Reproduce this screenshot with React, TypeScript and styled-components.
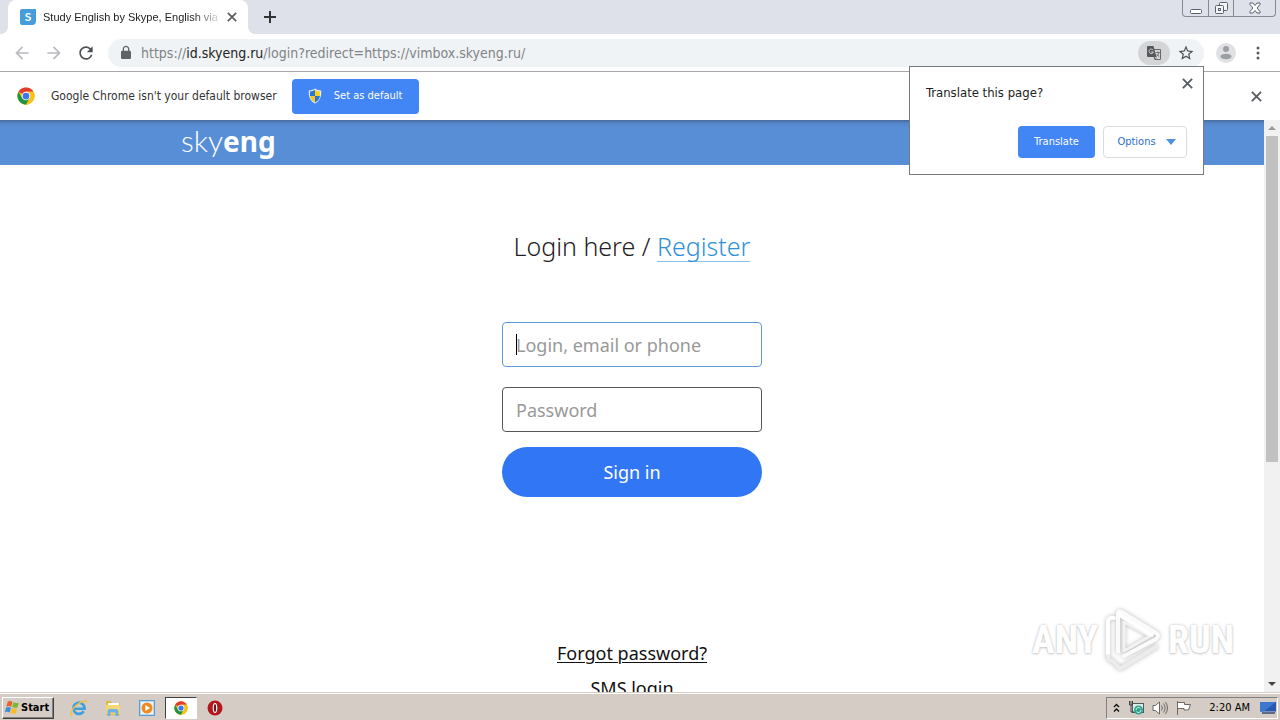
import React from 'react';
import styled, { createGlobalStyle, css } from 'styled-components';

const ui = '"DejaVu Sans Condensed", "Noto Sans", sans-serif';
const site = '"Noto Sans", "Open Sans", sans-serif';

const GlobalStyle = createGlobalStyle`
  *, *::before, *::after { box-sizing: border-box; }
  body { margin: 0; background: #fff; font-family: ${ui}; overflow: hidden; }
  button, input { font: inherit; }
  button { padding: 0; border: 0; background: none; cursor: pointer; }
  svg { display: block; flex: none; }
`;

const Desktop = styled.div`
  position: relative;
  display: flex;
  flex-direction: column;
  height: 100vh;
`;

/* ---------- browser chrome ---------- */

const TabStrip = styled.header`
  display: flex;
  height: 34px;
  padding-left: 8px;
  background: #dee1e9;
`;

const Tab = styled.div`
  position: relative;
  display: flex;
  align-items: center;
  gap: 7px;
  width: 240px;
  padding: 0 10px 0 12px;
  background: #fff;
  border-radius: 8px 8px 0 0;

  &::before, &::after {
    content: '';
    position: absolute;
    bottom: 0;
    width: 8px;
    height: 8px;
  }
  &::before { right: 100%; background: radial-gradient(circle at 0 0, transparent 8px, #fff 8px); }
  &::after { left: 100%; background: radial-gradient(circle at 100% 0, transparent 8px, #fff 8px); }
`;

const TabTitle = styled.span`
  flex: 1;
  min-width: 0;
  overflow: hidden;
  white-space: nowrap;
  font: 11px/16px "Liberation Sans", sans-serif;
  color: #222;
  mask-image: linear-gradient(to right, #000 150px, transparent 180px);
`;

const IconButton = styled.button<{ $size?: number }>`
  display: flex;
  align-items: center;
  justify-content: center;
  flex: none;
  width: ${p => p.$size ?? 16}px;
  height: ${p => p.$size ?? 16}px;
  color: #5a5d61;
`;

const NewTab = styled(IconButton)`
  align-self: center;
  margin-left: 10px;
  color: #333;
`;

const WindowControls = styled.div`
  position: absolute;
  top: 0;
  right: 4px;
  display: flex;
  height: 17px;
  border: 1px solid #858993;
  border-top: 0;
  border-radius: 0 0 4px 4px;
`;

const WindowButton = styled.button<{ $wide?: boolean }>`
  display: flex;
  align-items: center;
  justify-content: center;
  width: ${p => (p.$wide ? 42 : 25)}px;
  & + & { border-left: 1px solid #858993; }
`;

const Toolbar = styled.div`
  display: flex;
  align-items: center;
  height: 38px;
  padding: 0 12px;
  border-bottom: 1px solid #a9a9ad;
  background: #fff;
`;

const NavButtons = styled.nav`
  display: flex;
  gap: 12px;
`;

const Omnibox = styled.div`
  display: flex;
  flex: 1;
  align-items: center;
  height: 28px;
  margin: 0 12px;
  padding: 0 9px 0 10px;
  border-radius: 14px;
  background: #f0f3f5;
`;

const Url = styled.div`
  flex: 1;
  margin-left: 7px;
  font: 14px/20px ${ui};
  color: #808387;
  b { font-weight: 400; color: #222; }
`;

const TranslateChip = styled.button`
  display: flex;
  align-items: center;
  justify-content: center;
  width: 32px;
  height: 24px;
  margin-right: 7px;
  border-radius: 12px;
  background: #d3d5d7;
`;

const Avatar = styled(IconButton)`
  margin-right: 12px;
`;

const InfoBar = styled.div`
  display: flex;
  align-items: center;
  height: 48px;
  padding: 0 16px 0 17px;
  background: #fff;
`;

const InfoText = styled.span`
  margin: 0 15px 0 16px;
  font-size: 12px;
  line-height: 16px;
  color: #333;
`;

const blueButton = css`
  display: flex;
  align-items: center;
  justify-content: center;
  border-radius: 4px;
  background: #4285f4;
  color: #fff;
  font-size: 11px;
  line-height: 16px;
`;

const DefaultButton = styled.button`
  ${blueButton}
  gap: 12px;
  width: 127px;
  height: 35px;
  margin-right: auto;
`;

const Bubble = styled.section`
  position: absolute;
  top: 66px;
  right: 76px;
  z-index: 2;
  width: 295px;
  padding: 8px 16px 16px;
  border: 1px solid #77797c;
  background: #fff;
`;

const BubbleHead = styled.div`
  display: flex;
  justify-content: space-between;
  height: 51px;
  margin-right: -8px;
`;

const BubbleTitle = styled.h2`
  margin: 8px 0 0;
  font-size: 13px;
  line-height: 20px;
  font-weight: 400;
  color: #222;
`;

const BubbleActions = styled.div`
  display: flex;
  justify-content: flex-end;
  gap: 8px;
`;

const TranslateButton = styled.button`
  ${blueButton}
  width: 77px;
  height: 32px;
`;

const OptionsButton = styled(TranslateButton)`
  gap: 10px;
  width: 84px;
  padding-left: 3px;
  border: 1px solid #dadce0;
  background: #fff;
  color: #2a6fc9;
`;

/* ---------- web page ---------- */

const Viewport = styled.div`
  display: flex;
  flex: 1;
  min-height: 0;
`;

const Page = styled.div`
  flex: 1;
  min-width: 0;
  overflow: hidden;
  background: #fff;
  font-family: ${site};
`;

const SiteHeader = styled.header`
  height: 45px;
  background: linear-gradient(#46699c 0, #5585c6 3px, #588ed6 7px);
`;

const SiteHeaderInner = styled.div`
  max-width: 902px;
  margin: 0 auto;
`;

const Logo = styled.a`
  display: inline-block;
  color: #fff;
  font: 300 30px/40px Lato, sans-serif;
  text-decoration: none;
  b { font: 700 28px/40px ${site}; }
`;

const Main = styled.main`
  display: flex;
  flex-direction: column;
  align-items: center;
  padding-top: 65px;
`;

const Heading = styled.h1`
  margin: 0 0 60px;
  font-size: 25px;
  line-height: 32px;
  font-weight: 300;
  color: #222;
  a {
    display: inline-block;
    line-height: 29px;
    border-bottom: 1px solid #8cc2ea;
    color: #2f8fd8;
    text-decoration: none;
  }
`;

const Form = styled.form`
  display: flex;
  flex-direction: column;
  width: 260px;
  font-size: 18px;
`;

const Field = styled.label`
  position: relative;
  display: block;
  margin-bottom: 20px;
`;

const Input = styled.input<{ $active?: boolean }>`
  display: block;
  width: 100%;
  height: 45px;
  padding: 0 13px;
  border: 1px solid ${p => (p.$active ? '#5c9bdc' : '#55565a')};
  border-radius: 4px;
  background: #fff;
  color: #333;
  outline: none;
  &::placeholder { color: #999; opacity: 1; }
`;

const Caret = styled.span`
  position: absolute;
  top: 12px;
  left: 14px;
  width: 1px;
  height: 21px;
  background: #000;
`;

const SignIn = styled.button`
  height: 50px;
  margin-top: -5px;
  border-radius: 25px;
  background: #3176f4;
  color: #fff;
`;

const Links = styled.nav`
  display: flex;
  flex-direction: column;
  align-items: center;
  gap: 11px;
  margin-top: 144px;
  font-size: 18px;
  line-height: 24px;
  a { color: #111; text-underline-offset: 2px; text-decoration-thickness: 1px; }
`;

const ScrollBar = styled.div`
  display: flex;
  flex-direction: column;
  justify-content: space-between;
  width: 16px;
  background: #f1f1f1;
`;

const ScrollThumb = styled.div`
  flex: 0 0 57%;
  margin: 0 2px auto;
  background: #c1c1c1;
`;

const Watermark = styled.div`
  position: absolute;
  right: 46px;
  bottom: 48px;
  display: flex;
  align-items: center;
  gap: 6px;
  color: #fff;
  font: 700 38px/62px "Liberation Sans Narrow", "Roboto Condensed", "Liberation Sans", sans-serif;
  text-shadow: 0 0 3px #c2c2c2, 0 1px 2px #d5d5d5;
  svg { filter: drop-shadow(0 0 2px #b8b8b8); }
`;

/* ---------- taskbar ---------- */

const Taskbar = styled.footer`
  display: flex;
  align-items: center;
  height: 28px;
  padding: 2px 2px 0 2px;
  border-top: 1px solid #d4cec6;
  box-shadow: inset 0 1px #fff;
  background: #d5cdc5;
`;

const StartButton = styled.button`
  display: flex;
  align-items: center;
  width: 52px;
  height: 22px;
  padding-left: 1px;
  margin-right: 8px;
  border: 1px solid;
  border-color: #fff #404040 #404040 #fff;
  box-shadow: inset -1px -1px #808080;
  font: 700 11px/16px ${ui};
  color: #000;
`;

const Task = styled.button<{ $open?: boolean }>`
  display: flex;
  align-items: center;
  justify-content: center;
  width: 34px;
  height: 22px;
  ${p =>
    p.$open &&
    css`
      width: 32px;
      margin: 0 1px;
      border: 1px solid;
      border-color: #404040 #fff #fff #404040;
      background: #fff;
    `}
`;

const Tray = styled.div`
  display: flex;
  align-items: center;
  gap: 8px;
  height: 22px;
  margin-left: auto;
  padding: 0 1px 0 6px;
  border: 1px solid;
  border-color: #808080 #fff #fff #808080;
`;

const Clock = styled.time`
  margin: 0 2px 0 9px;
  font: 11px/16px ${ui};
  color: #000;
`;

/* ---------- icons ---------- */

const Glyph = ({ d, size = 20, color = '#5f6368' }: { d: string; size?: number; color?: string }) => (
  <svg width={size} height={size} viewBox="0 0 24 24" fill={color}>
    <path d={d} />
  </svg>
);

const Cross = ({ size = 11 }: { size?: number }) => (
  <svg width={size} height={size} viewBox="0 0 10 10" stroke="currentColor" strokeWidth="1.7">
    <path d="M.8.8l8.400 8.400M9.200.8L.8 9.200" />
  </svg>
);

const ChromeLogo = ({ size = 18 }: { size?: number }) => (
  <svg width={size} height={size} viewBox="0 0 48 48">
    <circle cx="24" cy="24" r="23" fill="#fbc116" />
    <path d="M24 24L4.1 12.5A23 23 0 0 1 43.9 12.5H24z" fill="#e33b2e" />
    <path d="M4.1 12.5A23 23 0 0 0 24 47L34 29.7 24 24 14 29.7z" fill="#229342" />
    <path d="M24 12.5h19.9A23 23 0 0 1 24 47l10-17.3z" fill="#fbc116" />
    <circle cx="24" cy="24" r="11.5" fill="#fff" />
    <circle cx="24" cy="24" r="9" fill="#3b78e7" />
  </svg>
);

const SkyengIcon = () => (
  <svg width="16" height="16" viewBox="0 0 16 16">
    <path d="M2 0h14v12a4 4 0 0 1-4 4H2a2 2 0 0 1-2-2V2a2 2 0 0 1 2-2z" fill="#459ddb" />
    <text x="8" y="12" textAnchor="middle" fontFamily="Lato, sans-serif" fontWeight="700" fontSize="12" fill="#fff">S</text>
  </svg>
);

const Shield = () => (
  <svg width="14" height="16" viewBox="0 0 14 16">
    <path d="M7 .5C5 2 3 2.4.8 2.4c-.4 6 1.2 10.4 6.2 13 5-2.6 6.600-7 6.200-13C11 2.400 9 2 7 .5z" fill="#e9edf2" />
    <path d="M7 1.800C5.400 2.900 3.800 3.300 2 3.400V8h5z" fill="#2e73d8" />
    <path d="M7 1.800c1.600 1.100 3.200 1.500 5 1.600V8H7z" fill="#f8d21c" />
    <path d="M2 8c.4 2.800 2 5 5 6.400V8z" fill="#f8c81c" />
    <path d="M12 8c-.4 2.800-2 5-5 6.400V8z" fill="#2e73d8" />
  </svg>
);

const TranslateIcon = () => (
  <svg width="16" height="16" viewBox="0 0 16 16">
    <path d="M7 4.500h7.500v10H9z" fill="#d3d5d7" stroke="#66696c" />
    <path d="M2 1h5.500l3 11H2a1 1 0 0 1-1-1V2a1 1 0 0 1 1-1z" fill="#55585b" />
    <path d="M7.200 5.200A2.200 2.200 0 1 0 7.400 7H5.300" fill="none" stroke="#d3d5d7" />
    <path d="M9.800 7.500h4M11.800 6.500v1M13 7.500c-.3 1.800-1.300 3-2.500 3.800M10.800 9c.6 1.200 1.400 2 2.400 2.500M8 12.500l1 2 1.500-2" fill="none" stroke="#66696c" strokeWidth=".9" />
  </svg>
);

const AvatarIcon = () => (
  <svg width="20" height="20" viewBox="0 0 20 20">
    <circle cx="10" cy="10" r="10" fill="#e0e1e3" />
    <circle cx="10" cy="6" r="3" fill="#9b9ea2" />
    <ellipse cx="10" cy="13.500" rx="5.500" ry="2.700" fill="#9b9ea2" />
  </svg>
);

const ScrollArrow = ({ down }: { down?: boolean }) => (
  <svg width="16" height="16" viewBox="0 0 16 16">
    <path d={down ? 'M4 6h8l-4 4z' : 'M4 10h8l-4-4z'} fill={down ? '#444' : '#999'} />
  </svg>
);

const Dropdown = () => (
  <svg width="10" height="6" viewBox="0 0 10 6">
    <path d="M0 0h10L5 6z" fill="#4e8fe0" />
  </svg>
);

const PlayMark = () => (
  <svg width="58" height="64" viewBox="0 0 58 64" fill="none" stroke="#fff" strokeWidth="4" strokeLinejoin="round" strokeLinecap="round">
    <path d="M14 44V6q0-4 4-2l34 21q4 3 0 6L20 48" stroke="#fbfbfb" />
    <path d="M20 14l26 14-26 15z" stroke="#f2f2f2" strokeWidth="3" />
    <path d="M10 10q-6-1-6 4v34" />
    <path d="M4 48q0 5 5 5l5 6q2 2 5 0l33-20" stroke="#ececec" />
    <path d="M14 6l34 21" />
  </svg>
);

const WindowsFlag = () => (
  <svg width="17" height="17" viewBox="0 0 16 16">
    <path d="M3.500 2.500C5 1.600 6.500 1.800 8 2.700L6.800 7.400C5.300 6.500 3.800 6.400 2.200 7.200z" fill="#e8602c" />
    <path d="M8.800 3c1.600.9 3.200 1 5.200.200l-1.300 4.600c-1.700.8-3.400.7-5-.2z" fill="#7db832" />
    <path d="M2 8c1.500-.8 3-.7 4.600.200l-1.200 4.600c-1.500-.9-3-1-4.600-.2z" fill="#3f8edb" />
    <path d="M7.400 8.500c1.600.8 3.300 1 5 .2l-1.200 4.600c-1.800.8-3.400.6-5-.2z" fill="#f7bd22" />
  </svg>
);

const IeIcon = () => (
  <svg width="18" height="18" viewBox="0 0 18 18" fill="none">
    <path d="M13.700 12.200A5.600 5.600 0 1 1 14.500 9.800H4.500" stroke="#3c9fe0" strokeWidth="2.600" />
    <path d="M2.500 15.500C-1 17 1 11 6 6.500 11 2 17 .5 16.500 3.500" stroke="#f0c040" strokeWidth="1.500" />
  </svg>
);

const FolderIcon = () => (
  <svg width="18" height="18" viewBox="0 0 18 18">
    <path d="M2 2h5l1 2h8v12H2z" fill="#e2b748" />
    <path d="M4 4h11v5H4z" fill="#fff" />
    <path d="M2 6h14v9H2z" fill="#f5d675" />
    <path d="M3.500 17v-5c0-1 1-2 2-2h7c1 0 2 1 2 2v5H11.500v-3.500h-5V17z" fill="#6fb2e2" />
  </svg>
);

const MediaIcon = () => (
  <svg width="16" height="16" viewBox="0 0 16 16">
    <rect x=".5" y=".5" width="15" height="15" fill="#b9d9f5" stroke="#5a9ad2" />
    <rect x="2" y="2" width="12" height="12" fill="#e9f3fb" />
    <circle cx="8" cy="8" r="5.500" fill="#f08a1d" />
    <path d="M6.300 5v6l4.700-3z" fill="#fff" />
  </svg>
);

const OperaIcon = () => (
  <svg width="16" height="16" viewBox="0 0 16 16">
    <circle cx="8" cy="8" r="7.500" fill="#b3161b" />
    <ellipse cx="8" cy="8" rx="2.300" ry="5" fill="#fff" />
    <ellipse cx="8" cy="8" rx="1.100" ry="4" fill="#7d0d10" />
  </svg>
);

const NetworkIcon = () => (
  <svg width="16" height="16" viewBox="0 0 16 16">
    <rect x="4.500" y="3.500" width="11" height="9" fill="#dcebe8" stroke="#4e5a5c" />
    <path d="M1.500 1v4h3V1M3 1v11h3" fill="none" stroke="#444" />
    <circle cx="10.500" cy="10" r="4.500" fill="#2fa38f" />
    <path d="M8 10a2.500 2.500 0 0 1 4.500-1.500M13 10a2.500 2.500 0 0 1-4.500 1.500" fill="none" stroke="#d9f3ec" />
  </svg>
);

const VolumeIcon = () => (
  <svg width="16" height="16" viewBox="0 0 16 16" fill="none" stroke="#6a6764">
    <path d="M1 5.500h2.500L7.500 2v12l-4-3.500H1z" fill="#fff" />
    <path d="M9.500 5.500q1.800 2.500 0 5M11.500 3.500q3.200 4.500 0 9M13.500 2q4 6 0 12" />
  </svg>
);

const FlagIcon = () => (
  <svg width="16" height="16" viewBox="0 0 16 16" stroke="#6a6764">
    <path d="M1.500 1v14" fill="none" />
    <path d="M1.500 2.500h7v2h6l-2 5.500H8V8.500H1.500z" fill="#fff" />
  </svg>
);

const DesktopIcon = () => (
  <svg width="16" height="14" viewBox="0 0 16 14">
    <path d="M0 1h16v9.500H0z" fill="#2558ae" />
    <path d="M0 1h16L4 10.500H0z" fill="#3c78d0" />
    <path d="M2 12h13" stroke="#344a70" strokeWidth="1.500" />
  </svg>
);

export default function App() {
  return (
    <Desktop>
      <GlobalStyle />
      <TabStrip>
        <Tab>
          <SkyengIcon />
          <TabTitle>Study English by Skype, English via S</TabTitle>
          <IconButton $size={12} aria-label="Close tab"><Cross size={10} /></IconButton>
        </Tab>
        <NewTab $size={24} aria-label="New tab">
          <svg width="12" height="12" viewBox="0 0 12 12" stroke="currentColor" strokeWidth="2"><path d="M6 0v12M0 6h12" /></svg>
        </NewTab>
        <WindowControls>
          <WindowButton aria-label="Minimize">
            <svg width="12" height="14" viewBox="0 0 12 14"><rect x=".5" y="8.500" width="11" height="4" rx="1" fill="#fff" stroke="#5d616b" /></svg>
          </WindowButton>
          <WindowButton aria-label="Restore">
            <svg width="13" height="14" viewBox="0 0 13 14" fill="#f4f5f8" stroke="#5d616b">
              <rect x="4.500" y="1.500" width="8" height="8" rx="1" />
              <rect x=".5" y="4.500" width="8" height="8" rx="1" />
              <rect x="3.500" y="7.500" width="2" height="2" />
            </svg>
          </WindowButton>
          <WindowButton $wide aria-label="Close">
            <svg width="12" height="12" viewBox="0 0 12 12">
              <path d="M1 1h3l2 2.500L8 1h3v1.500L8 6l3 3.500V11H8L6 8.500 4 11H1V9.500L4 6 1 2.500z" fill="#fff" stroke="#5d616b" />
            </svg>
          </WindowButton>
        </WindowControls>
      </TabStrip>

      <Toolbar>
        <NavButtons>
          <IconButton $size={20} aria-label="Back"><Glyph color="#b9bbbe" d="M20 11H7.830l5.590-5.590L12 4l-8 8 8 8 1.410-1.410L7.830 13H20v-2z" /></IconButton>
          <IconButton $size={20} aria-label="Forward"><Glyph color="#b9bbbe" d="M4 11h12.170l-5.590-5.590L12 4l8 8-8 8-1.410-1.410L16.170 13H4v-2z" /></IconButton>
          <IconButton $size={20} aria-label="Reload"><Glyph color="#4d5054" d="M17.650 6.350A7.958 7.958 0 0 0 12 4c-4.420 0-7.990 3.580-7.990 8s3.570 8 7.990 8c3.730 0 6.840-2.550 7.730-6h-2.080A5.990 5.990 0 0 1 12 18c-3.310 0-6-2.690-6-6s2.690-6 6-6c1.660 0 3.140.690 4.220 1.780L13 11h7V4l-2.350 2.350z" /></IconButton>
        </NavButtons>
        <Omnibox>
          <Glyph size={16} d="M17.500 8.500H17V6c0-2.760-2.240-5-5-5S7 3.240 7 6v2.500h-.5C5.100 8.500 4.500 9.400 4.500 10.500v8.500c0 1.100.9 2 2 2h11c1.100 0 2-.9 2-2v-8.500c0-1.100-.9-2-2-2zM9 6c0-1.660 1.340-3 3-3s3 1.340 3 3v2.500H9V6z" />
          <Url>https://<b>id.skyeng.ru</b>/login?redirect=https://vimbox.skyeng.ru/</Url>
          <TranslateChip aria-label="Translate this page"><TranslateIcon /></TranslateChip>
          <IconButton $size={18} aria-label="Bookmark this page"><Glyph size={18} color="#4d5054" d="M22 9.240l-7.190-.62L12 2 9.190 8.630 2 9.240l5.460 4.730L5.820 21 12 17.270 18.180 21l-1.630-7.030L22 9.240zM12 15.400l-3.760 2.270 1-4.280-3.320-2.880 4.380-.38L12 6.100l1.710 4.040 4.380.380-3.320 2.880 1 4.280L12 15.400z" /></IconButton>
        </Omnibox>
        <Avatar $size={20} aria-label="Profile"><AvatarIcon /></Avatar>
        <IconButton $size={20} aria-label="Menu">
          <svg width="4" height="14" viewBox="0 0 4 14" fill="currentColor"><circle cx="2" cy="2" r="1.500" /><circle cx="2" cy="7" r="1.500" /><circle cx="2" cy="12" r="1.500" /></svg>
        </IconButton>
      </Toolbar>

      <InfoBar>
        <ChromeLogo />
        <InfoText>Google Chrome isn't your default browser</InfoText>
        <DefaultButton><Shield />Set as default</DefaultButton>
        <IconButton aria-label="Dismiss"><Cross /></IconButton>
      </InfoBar>

      <Bubble>
        <BubbleHead>
          <BubbleTitle>Translate this page?</BubbleTitle>
          <IconButton aria-label="Close"><Cross /></IconButton>
        </BubbleHead>
        <BubbleActions>
          <TranslateButton>Translate</TranslateButton>
          <OptionsButton>Options<Dropdown /></OptionsButton>
        </BubbleActions>
      </Bubble>

      <Viewport>
        <Page>
          <SiteHeader>
            <SiteHeaderInner><Logo href="#">sky<b>eng</b></Logo></SiteHeaderInner>
          </SiteHeader>
          <Main>
            <Heading>Login here / <a href="#register">Register</a></Heading>
            <Form onSubmit={e => e.preventDefault()}>
              <Field>
                <Input $active type="text" placeholder="Login, email or phone" aria-label="Login, email or phone" />
                <Caret />
              </Field>
              <Field>
                <Input type="password" placeholder="Password" aria-label="Password" />
              </Field>
              <SignIn type="submit">Sign in</SignIn>
            </Form>
            <Links>
              <a href="#forgot">Forgot password?</a>
              <a href="#sms">SMS login</a>
            </Links>
          </Main>
        </Page>
        <ScrollBar>
          <ScrollArrow />
          <ScrollThumb />
          <ScrollArrow down />
        </ScrollBar>
      </Viewport>

      <Watermark><span>ANY</span><PlayMark /><span>RUN</span></Watermark>

      <Taskbar>
        <StartButton><WindowsFlag />Start</StartButton>
        <Task aria-label="Internet Explorer"><IeIcon /></Task>
        <Task aria-label="Explorer"><FolderIcon /></Task>
        <Task aria-label="Media Player"><MediaIcon /></Task>
        <Task $open aria-label="Chrome"><ChromeLogo size={14} /></Task>
        <Task aria-label="Opera"><OperaIcon /></Task>
        <Tray>
          <svg width="7" height="10" viewBox="0 0 7 10" fill="none" stroke="#111" strokeWidth="1.400"><path d="M1 4l2.500-2.500L6 4M1 8.500L3.500 6 6 8.500" /></svg>
          <NetworkIcon />
          <VolumeIcon />
          <FlagIcon />
          <Clock>2:20 AM</Clock>
          <DesktopIcon />
        </Tray>
      </Taskbar>
    </Desktop>
  );
}
